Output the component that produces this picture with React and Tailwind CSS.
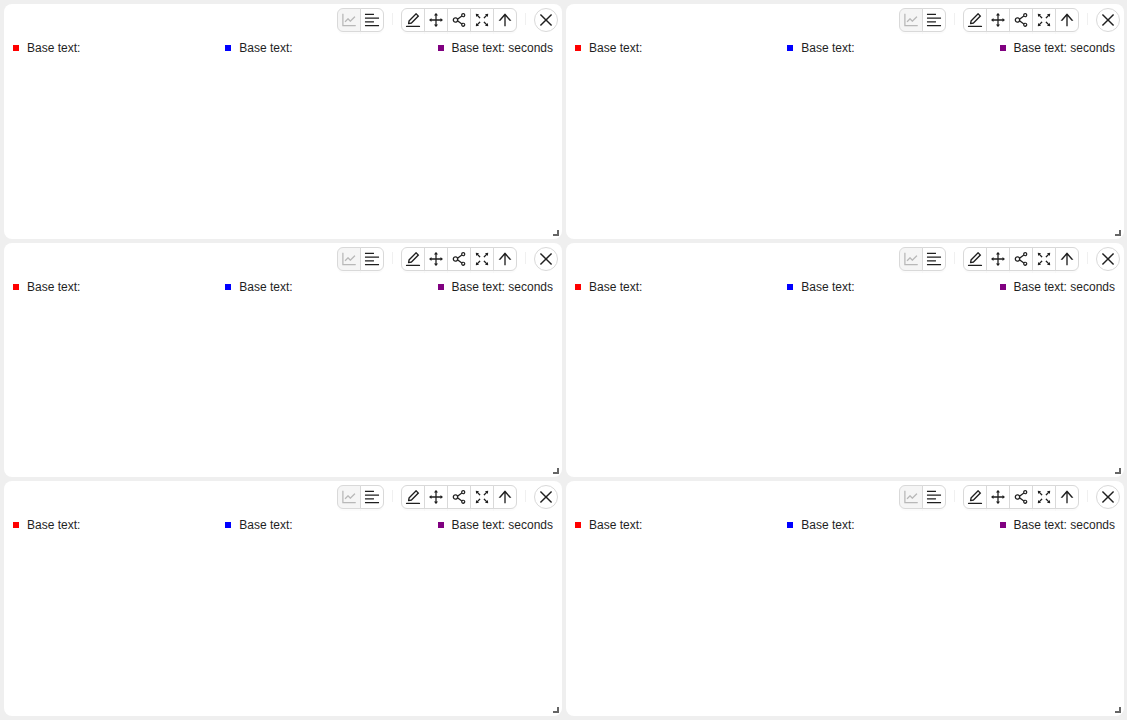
import React from 'react';
import {
  AiOutlineLineChart,
  AiOutlineAlignLeft,
  AiOutlineEdit,
  AiOutlineDrag,
  AiOutlineShareAlt,
  AiOutlineFullscreen,
  AiOutlineArrowUp,
  AiOutlineClose,
} from 'react-icons/ai';

const views = [
  { label: 'Chart view', Icon: AiOutlineLineChart, disabled: true },
  { label: 'Legend view', Icon: AiOutlineAlignLeft },
];

const actions = [
  { label: 'Edit', Icon: AiOutlineEdit },
  { label: 'Move', Icon: AiOutlineDrag },
  { label: 'Share', Icon: AiOutlineShareAlt },
  { label: 'Full screen', Icon: AiOutlineFullscreen },
  { label: 'Move to top', Icon: AiOutlineArrowUp },
];

const series = [
  { color: 'bg-[#ff0000]', text: 'Base text:' },
  { color: 'bg-[#0000ff]', text: 'Base text:' },
  { color: 'bg-[#800080]', text: 'Base text: seconds' },
];

function ButtonGroup({ items }) {
  return (
    <div className="flex -space-x-px">
      {items.map(({ label, Icon, disabled }) => (
        <button
          key={label}
          type="button"
          aria-label={label}
          disabled={disabled}
          className="flex size-6 items-center justify-center border border-[#d9d9d9] bg-white text-[#1f1f1f] shadow-[0_2px_0_rgba(0,0,0,0.016)] first:rounded-l-md last:rounded-r-md disabled:bg-[#f5f5f5] disabled:text-[#b8b8b8]"
        >
          <Icon className="size-[18px] shrink-0" />
        </button>
      ))}
    </div>
  );
}

function Divider() {
  return <span className="mb-0.5 h-3 w-px bg-[#f0f0f0]" />;
}

function Panel() {
  return (
    <section className="relative flex min-h-32 flex-col rounded-lg bg-white">
      <div className="flex items-center justify-end gap-2 p-1">
        <ButtonGroup items={views} />
        <Divider />
        <ButtonGroup items={actions} />
        <Divider />
        <button
          type="button"
          aria-label="Close"
          className="flex size-6 items-center justify-center rounded-full border border-[#d9d9d9] bg-white text-[#1f1f1f]"
        >
          <AiOutlineClose className="size-[18px] shrink-0" />
        </button>
      </div>
      <ul className="flex justify-between px-[9px] pt-1 text-xs text-[#1f1f1f]">
        {series.map(({ color, text }, i) => (
          <li key={i} className="flex items-center gap-2">
            <span className={`size-1.5 ${color}`} />
            {text}
          </li>
        ))}
      </ul>
      <span className="absolute right-[3px] bottom-[3px] size-1.5 cursor-se-resize border-r-2 border-b-2 border-black/60" />
    </section>
  );
}

export default function App() {
  return (
    <main className="grid min-h-screen auto-rows-fr grid-cols-2 gap-1 bg-[#efefef] py-1 pr-[3px] pl-1 font-['Liberation_Sans',Arial,sans-serif]">
      {Array.from({ length: 6 }, (_, i) => (
        <Panel key={i} />
      ))}
    </main>
  );
}
